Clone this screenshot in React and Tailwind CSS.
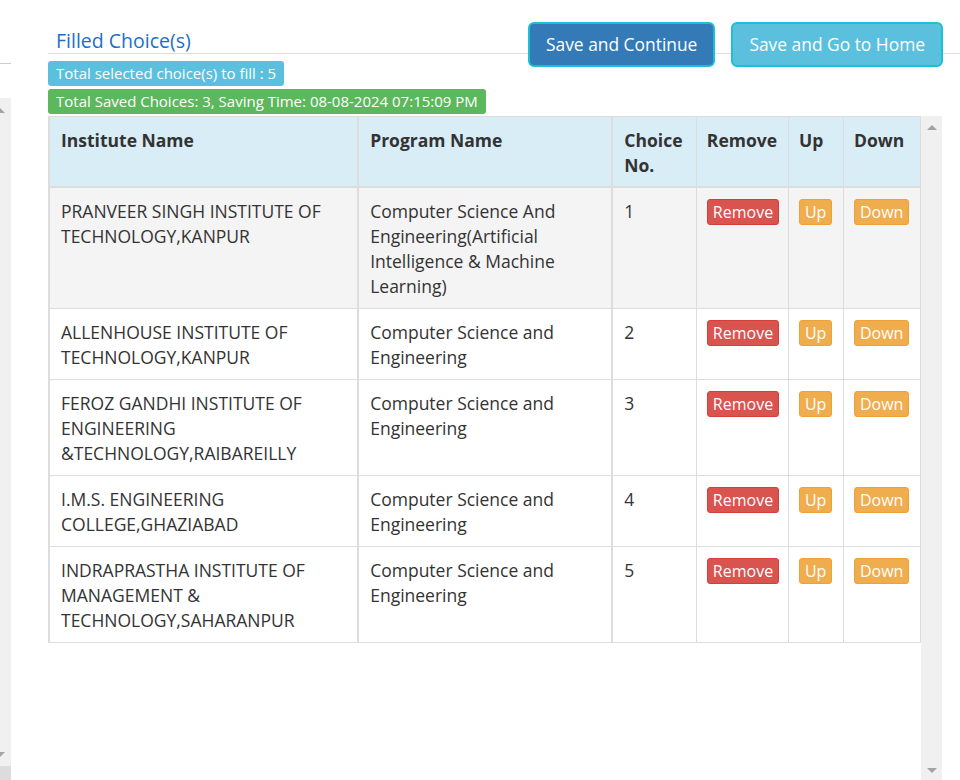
import React from 'react';

const rows = [
    { inst: 'PRANVEER SINGH INSTITUTE OF TECHNOLOGY,KANPUR', prog: 'Computer Science And Engineering(Artificial Intelligence & Machine Learning)', no: 1 },
    { inst: 'ALLENHOUSE INSTITUTE OF TECHNOLOGY,KANPUR', prog: 'Computer Science and Engineering', no: 2 },
    { inst: 'FEROZ GANDHI INSTITUTE OF ENGINEERING &TECHNOLOGY,RAIBAREILLY', prog: 'Computer Science and Engineering', no: 3 },
    { inst: 'I.M.S. ENGINEERING COLLEGE,GHAZIABAD', prog: 'Computer Science and Engineering', no: 4 },
    { inst: 'INDRAPRASTHA INSTITUTE OF MANAGEMENT & TECHNOLOGY,SAHARANPUR', prog: 'Computer Science and Engineering', no: 5 },
];

const UpArrow = () => (
    <div className="w-0 h-0 border-x-[5px] border-x-transparent border-b-[5px] border-b-[#a3a3a3]" />
);
const DownArrow = () => (
    <div className="w-0 h-0 border-x-[5px] border-x-transparent border-t-[5px] border-t-[#a3a3a3]" />
);

const SmallBtn = ({ children, red }) => (
    <button
        className={
            red
                ? 'h-[26px] px-[5px] rounded-[3px] border border-[#d43f3a] bg-[#d9534f] text-white text-[16px] leading-[22px]'
                : 'h-[26px] px-[5px] rounded-[3px] border border-[#eea236] bg-[#f0ad4e] text-white text-[16px] leading-[22px]'
        }
    >
        {children}
    </button>
);

export default function App() {
    return (
        <div className="flex h-[780px] w-[960px] overflow-hidden bg-white text-[#333]" style={{ fontFamily: '"Open Sans", "Liberation Sans", sans-serif' }}>
            {/* left panel edge */}
            <div className="w-[11px] flex flex-col">
                <div className="h-[64px] border-b border-[#cccccc]" />
                <div className="h-[34px]" />
                <div className="flex-1 bg-[#f0f0f0] flex flex-col justify-between pt-[10px] pb-[9px] -ml-[5px]">
                    <UpArrow />
                    <DownArrow />
                </div>
                <div className="h-[14px] bg-[#dcdcdc]" />
            </div>

            {/* main */}
            <div className="flex-1 pl-[37px] flex flex-col">
                {/* header */}
                <div className="flex items-end justify-between border-b border-[#dddddd] pt-[22px]">
                    <h3 className="pl-[8px] text-[19.5px] leading-[25px] font-medium text-[#1d6fc4]">Filled Choice(s)</h3>
                    <div className="flex gap-[16px] mr-[17px] -mb-[14px]">
                        <button className="h-[45px] px-[16px] rounded-[6px] border-2 border-[#1bbfd6] bg-[#337ab7] text-white text-[17.4px]">
                            Save and Continue
                        </button>
                        <button className="h-[45px] px-[16px] rounded-[6px] border-2 border-[#1bbfd6] bg-[#5bc0de] text-white text-[17.4px]">
                            Save and Go to Home
                        </button>
                    </div>
                </div>

                {/* badges */}
                <div className="mt-[7px] flex flex-col items-start gap-[3px]">
                    <span className="h-[25px] px-[8px] rounded-[3px] bg-[#5bc0de] text-white text-[15px] leading-[25px]">
                        Total selected choice(s) to fill : 5
                    </span>
                    <span className="h-[25px] px-[8px] rounded-[3px] bg-[#5cb85c] text-white text-[15px] leading-[25px]">
                        Total Saved Choices: 3, Saving Time: 08-08-2024 07:15:09 PM
                    </span>
                </div>

                {/* table + scrollbar */}
                <div className="mt-[2px] flex flex-1">
                    <div className="w-[873px]">
                        <table className="table-fixed border-collapse w-[873px] text-[17.5px] leading-[25px] border-l-2 border-[#dddddd]">
                            <thead>
                                <tr className="bg-[#d9edf7] text-left">
                                    <th className="w-[309px] px-[11px] pt-[11px] pb-[8px] align-top font-bold border border-r-2 border-b-2 border-[#dddddd]">Institute Name</th>
                                    <th className="w-[254px] px-[11px] pt-[11px] pb-[8px] align-top font-bold border border-r-2 border-b-2 border-[#dddddd]">Program Name</th>
                                    <th className="w-[84px] px-[11px] pt-[11px] pb-[8px] align-top font-bold border border-b-2 border-[#dddddd]">Choice No.</th>
                                    <th className="w-[92px] px-[10px] pt-[11px] pb-[8px] align-top font-bold border border-b-2 border-[#dddddd]">Remove</th>
                                    <th className="w-[55px] px-[10px] pt-[11px] pb-[8px] align-top font-bold border border-b-2 border-[#dddddd]">Up</th>
                                    <th className="w-[77px] px-[10px] pt-[11px] pb-[8px] align-top font-bold border border-b-2 border-[#dddddd]">Down</th>
                                </tr>
                            </thead>
                            <tbody>
                                {rows.map((r, i) => (
                                    <tr key={r.no} className={i === 0 ? 'bg-[#f4f4f4]' : 'bg-white'}>
                                        <td className="px-[11px] pt-[11px] pb-[9px] align-top border border-r-2 border-[#dddddd]">{r.inst}</td>
                                        <td className="px-[11px] pt-[11px] pb-[9px] align-top border border-r-2 border-[#dddddd]">{r.prog}</td>
                                        <td className="px-[11px] pt-[11px] pb-[9px] align-top border border-[#dddddd]">{r.no}</td>
                                        <td className="px-[10px] pt-[11px] pb-[9px] align-top border border-[#dddddd]"><SmallBtn red>Remove</SmallBtn></td>
                                        <td className="px-[10px] pt-[11px] pb-[9px] align-top border border-[#dddddd]"><SmallBtn>Up</SmallBtn></td>
                                        <td className="px-[10px] pt-[11px] pb-[9px] align-top border border-[#dddddd]"><SmallBtn>Down</SmallBtn></td>
                                    </tr>
                                ))}
                            </tbody>
                        </table>
                    </div>
                    <div className="w-[21px] bg-[#f0f0f0] flex flex-col items-center justify-between pt-[9px] pb-[7px]">
                        <UpArrow />
                        <DownArrow />
                    </div>
                    <div className="flex-1" />
                </div>
            </div>
        </div>
    );
}
